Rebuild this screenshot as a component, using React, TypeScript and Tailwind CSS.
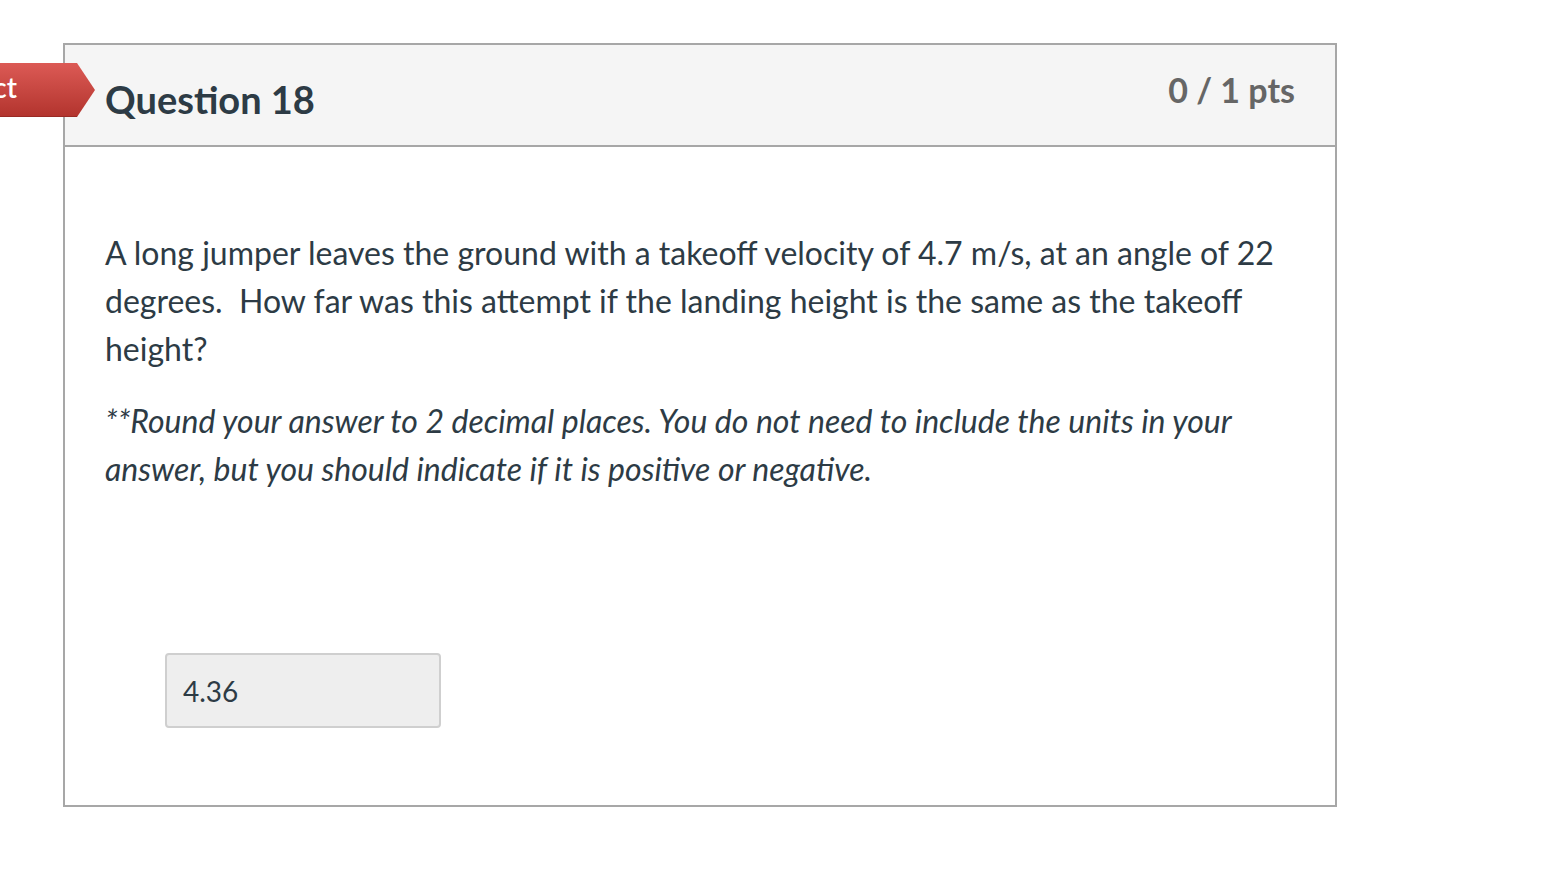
export default function App() {
  return (
    <div className="relative h-[872px] w-full overflow-hidden bg-white font-['Lato',sans-serif] text-[#2d3b45]">
      <div className="ml-[63px] mt-[43px] w-[1274px] border-2 border-[#a7a7a7]">
        <div className="flex h-[102px] justify-between border-b-2 border-[#a7a7a7] bg-[#f5f5f5] px-[40px]">
          <h2 className="pt-[32px] text-[38px] font-bold leading-[1.2] text-[#2d3b45]">Question 18</h2>
          <div className="pt-[25px] text-[34px] font-bold leading-[1.2] text-[#666666]">0 / 1 pts</div>
        </div>
        <div className="h-[658px] px-[40px] pt-[82px]">
          <p className="text-[32px] leading-[48px]">
            A long jumper leaves the ground with a takeoff velocity of 4.7 m/s, at an angle of 22 degrees.&nbsp; How far was this attempt if the landing height is the same as the takeoff height?
          </p>
          <p className="mt-[24px] text-[32px] italic leading-[48px]">
            **Round your answer to 2 decimal places. You do not need to include the units in your answer, but you should indicate if it is positive or negative.
          </p>
          <div className="ml-[60px] mt-[160px] flex h-[75px] w-[276px] items-center rounded-[4px] border-2 border-[#cfcfcf] bg-[#eeeeee] px-[16px] text-[28px]">
            4.36
          </div>
        </div>
      </div>

      <div className="absolute left-[-100px] top-[63px] flex h-[54px] w-[195px] items-center justify-end border-b border-[#9a2a24] bg-gradient-to-b from-[#dc5a55] to-[#b3342e] pr-[78px] text-[28px] font-semibold text-white [clip-path:polygon(0_0,177px_0,195px_50%,177px_100%,0_100%)]">
        <span className="-mt-[6px]">Incorrect</span>
      </div>
    </div>
  );
}
